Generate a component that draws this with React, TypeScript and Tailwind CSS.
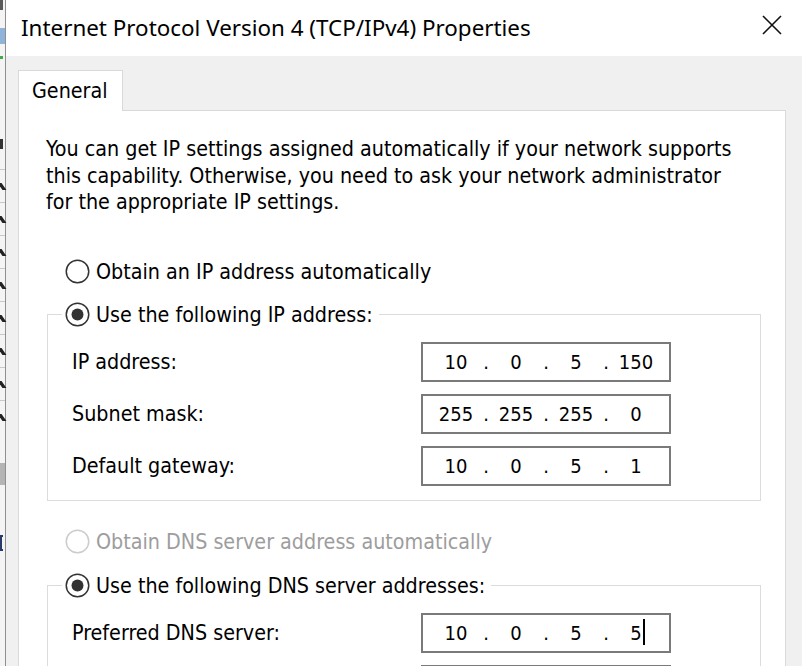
import React, { Fragment } from "react";

function Radio({ checked, disabled }: { checked?: boolean; disabled?: boolean }) {
  const stroke = disabled ? "#cccccc" : "#333333";
  return (
    <svg width="25" height="25" viewBox="0 0 25 25" className="shrink-0">
      <circle cx="12.5" cy="12.5" r="11.25" fill="white" stroke={stroke} strokeWidth="1.5" />
      {checked && <circle cx="12.5" cy="12.5" r="6" fill="#333333" />}
    </svg>
  );
}

function RadioRow({ label, checked, disabled }: { label: string; checked?: boolean; disabled?: boolean }) {
  return (
    <div className="h-[26px] flex items-center gap-[6px]">
      <Radio checked={checked} disabled={disabled} />
      <span className={disabled ? "text-[#9d9d9d]" : "text-black"}>{label}</span>
    </div>
  );
}

function IpField({ parts, caret }: { parts?: string[]; caret?: boolean }) {
  return (
    <div className="w-[250px] h-[40px] border-2 border-[#7a7a7a] bg-white flex items-center pl-[9px] text-[20px]">
      {parts &&
        parts.map((p, i) => (
          <Fragment key={i}>
            {i > 0 && <span className="w-[12px] text-center">.</span>}
            <span className="w-[48px] text-center">
              <span className="relative">
                {p}
                {caret && i === parts.length - 1 && (
                  <span className="absolute left-full top-[-2px] ml-px w-[2px] h-[26px] bg-black" />
                )}
              </span>
            </span>
          </Fragment>
        ))}
    </div>
  );
}

function FieldRow({ label, parts, caret }: { label?: string; parts?: string[]; caret?: boolean }) {
  return (
    <div className="flex items-center h-[40px]">
      <span className="w-[349px] shrink-0">{label}</span>
      <IpField parts={parts} caret={caret} />
    </div>
  );
}

function LeftStrip() {
  return (
    <div className="w-[6px] shrink-0 bg-[#f4f4f4] border-r border-[#8f8f8f] flex flex-col">
      <div className="h-[10px] bg-[#5a5a5a] w-[3px]" />
      <div className="h-[18px]" />
      <div className="h-[16px] bg-[#8fb3d9]" />
      <div className="h-[12px]" />
      <div className="h-[3px] w-[3px] bg-[#3fae49]" />
      <div className="h-[80px]" />
      <div className="h-[10px] w-[3px] bg-[#333]" />
      <div className="h-[20px]" />
      {[0, 1, 2, 3, 4, 5, 6, 7].map((i) => (
        <div key={i} className="h-[33px] border-t border-[#c8c8c8] flex flex-col justify-center">
          <div className="h-[7px] w-[4px] bg-[#222] skew-x-[35deg]" />
        </div>
      ))}
      <div className="h-[30px]" />
      <div className="h-[22px] bg-[#b4b4b4]" />
      <div className="h-[50px]" />
      <div className="h-[16px] w-[3px] border-2 border-r-0 border-[#2a3a6a]" />
    </div>
  );
}

export default function App() {
  const body = "font-['DejaVu_Sans_Condensed','DejaVu_Sans',sans-serif] font-stretch-condensed text-[21.3px] text-black";
  return (
    <div className="w-[802px] h-[666px] flex overflow-hidden bg-white">
      <LeftStrip />
      <div className="flex-1 flex flex-col">
        <div className="h-[56px] shrink-0 bg-white flex items-center justify-between pl-[15px] pr-[20px]">
          <span className="font-['Noto_Sans',sans-serif] text-[22.4px] text-black">
            Internet Protocol Version 4 (TCP/IPv4) Properties
          </span>
          <svg width="20" height="20" viewBox="0 0 20 20" className="mb-[6px]">
            <path d="M1 1 L19 19 M19 1 L1 19" stroke="#111" strokeWidth="1.6" />
          </svg>
        </div>
        <div className={`flex-1 bg-[#f0f0f0] pt-[14px] pl-[12px] pr-[16px] flex flex-col ${body}`}>
          <div className="w-[105px] h-[41px] bg-white border border-b-0 border-[#d9d9d9] relative z-10 -mb-px flex items-center pl-[13px]">
            General
          </div>
          <div className="flex-1 bg-white border border-b-0 border-[#d9d9d9] pl-[27px] pt-[25px] flex flex-col">
            <p className="leading-[26.5px]">
              You can get IP settings assigned automatically if your network supports
              <br />
              this capability. Otherwise, you need to ask your network administrator
              <br />
              for the appropriate IP settings.
            </p>
            <div className="mt-[43px] ml-[19px]">
              <RadioRow label="Obtain an IP address automatically" />
            </div>
            <fieldset className="mt-[17px] ml-px w-[714px] border border-[#dcdcdc]">
              <legend className="ml-[14px] pl-[3px] pr-[6px]">
                <RadioRow label="Use the following IP address:" checked />
              </legend>
              <div className="pl-[24px] pt-[14px] pb-[14px] flex flex-col gap-[12px]">
                <FieldRow label="IP address:" parts={["10", "0", "5", "150"]} />
                <FieldRow label="Subnet mask:" parts={["255", "255", "255", "0"]} />
                <FieldRow label="Default gateway:" parts={["10", "0", "5", "1"]} />
              </div>
            </fieldset>
            <div className="mt-[28px] ml-[19px]">
              <RadioRow label="Obtain DNS server address automatically" disabled />
            </div>
            <fieldset className="mt-[18px] ml-px w-[714px] border border-[#dcdcdc]">
              <legend className="ml-[14px] pl-[3px] pr-[6px]">
                <RadioRow label="Use the following DNS server addresses:" checked />
              </legend>
              <div className="pl-[24px] pt-[14px] pb-[14px] flex flex-col gap-[12px]">
                <FieldRow label="Preferred DNS server:" parts={["10", "0", "5", "5"]} caret />
                <FieldRow />
              </div>
            </fieldset>
          </div>
        </div>
      </div>
    </div>
  );
}
